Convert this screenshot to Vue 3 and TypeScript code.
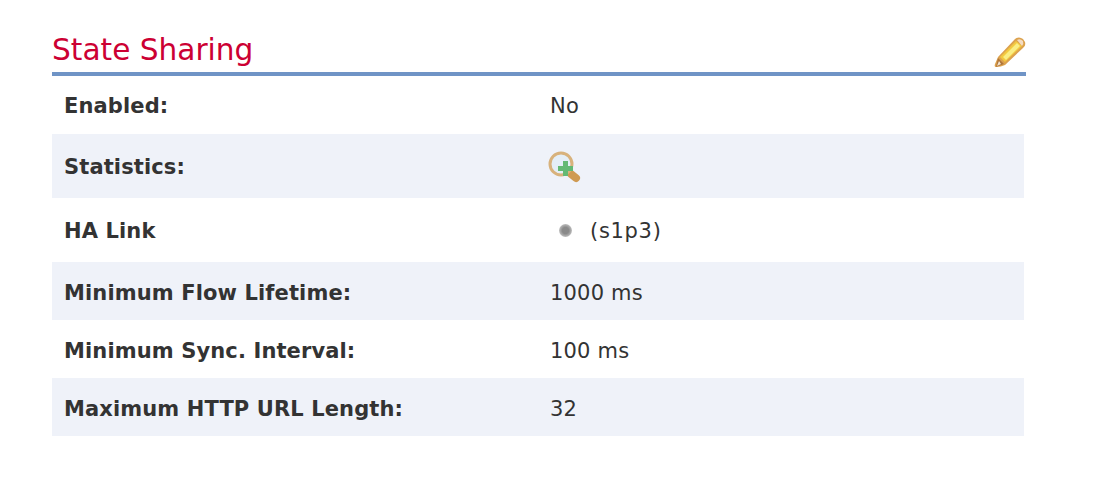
<script setup lang="ts">
interface Row {
  label: string;
  value?: string;
  kind?: "stats" | "link";
  height: number;
}

const rows: Row[] = [
  { label: "Enabled:", value: "No", height: 58 },
  { label: "Statistics:", kind: "stats", height: 64 },
  { label: "HA Link", kind: "link", value: "(s1p3)", height: 64 },
  { label: "Minimum Flow Lifetime:", value: "1000 ms", height: 58 },
  { label: "Minimum Sync. Interval:", value: "100 ms", height: 58 },
  { label: "Maximum HTTP URL Length:", value: "32", height: 58 },
];
</script>

<template>
  <div class="page">
    <section class="section">
      <header class="section__head">
        <h2 class="section__title">State Sharing</h2>
        <svg class="edit-icon" width="34" height="34" viewBox="0 0 34 34" aria-label="Edit">
          <path d="M5 23 L22 5 Q26 2 30 5 L32 8 Q33 12 30 14 L12 31 Q8 33 3 33 Q1 33 2 30 Z" fill="#dca24e" />
          <path d="M7 23 L23 7 L29 12 L12 28 Z" fill="#f3c93f" />
          <path d="M10 23 L24 9 L27 12 L13 26 Z" fill="#faee84" />
          <path d="M24 6 Q27 4 30 7 Q31 10 29 12 Z" fill="#f4dcc2" />
          <path d="M5 24 L11 30 L3 33 Z" fill="#b0763a" />
          <path d="M6 27 L8 30 L4 32 Z" fill="#f3e4cf" />
        </svg>
      </header>
      <div class="table">
        <div
          v-for="row in rows"
          :key="row.label"
          class="row"
          :style="{ height: row.height + 'px' }"
        >
          <div class="row__label">{{ row.label }}</div>
          <div class="row__value">
            <svg v-if="row.kind === 'stats'" class="zoom-icon" width="36" height="34" viewBox="0 0 36 34" aria-label="Statistics">
              <path d="M24 24 L29 28" stroke="#cf9a52" stroke-width="8" stroke-linecap="round" />
              <circle cx="14" cy="14" r="11" fill="#e4eef7" stroke="#d8b27c" stroke-width="3" />
              <path d="M16 11 h5 v5 h5 v5 h-5 v5 h-5 v-5 h-5 v-5 h5 z" fill="#63b974" />
            </svg>
            <template v-else-if="row.kind === 'link'">
              <span class="status-dot"></span>
              <span class="row__link">{{ row.value }}</span>
            </template>
            <template v-else>{{ row.value }}</template>
          </div>
        </div>
      </div>
    </section>
  </div>
</template>

<style scoped>
.page {
  padding: 28px 72px 46px 52px;
  font-family: "DejaVu Sans", Verdana, sans-serif;
  color: #333;
}

.section__head {
  display: flex;
  justify-content: space-between;
  align-items: flex-end;
  height: 44px;
  border-bottom: 4px solid #6f94c6;
}

.section__title {
  margin: 0;
  font-size: 29.6px;
  font-weight: 400;
  line-height: 44px;
  color: #cc0033;
  font-family: "DejaVu Sans", Verdana, sans-serif;
}

.edit-icon {
  margin: 0 -1px 4px 0;
}

.table {
  margin-right: 2px;
}

.row {
  display: flex;
  align-items: center;
  font-size: 21px;
  padding-top: 1px;
  box-sizing: border-box;
}

.row:nth-child(n + 4) {
  padding-top: 3px;
}

.row:nth-child(even) {
  background: #eff2f9;
}

.row__label {
  width: 486px;
  padding-left: 12px;
  box-sizing: border-box;
  font-weight: 700;
  letter-spacing: 0.12px;
}

.row__value {
  display: flex;
  align-items: center;
  padding-left: 12px;
  letter-spacing: 0.2px;
}

.row__link {
  letter-spacing: 0.7px;
}

.zoom-icon {
  margin: 0 0 0 -3px;
}

.status-dot {
  width: 13px;
  height: 13px;
  margin: 0 18px 0 9px;
  border-radius: 50%;
  background: radial-gradient(circle, #8a8a8a 0 35%, #bdbdbd 70%, #dcdcdc 100%);
  box-sizing: border-box;
}
</style>
